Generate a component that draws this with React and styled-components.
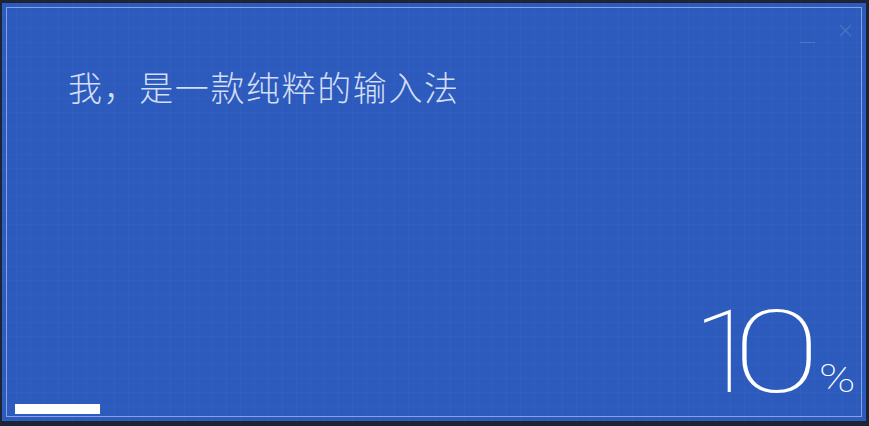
import styled, { createGlobalStyle } from 'styled-components';

const GlobalStyle = createGlobalStyle`
  html, body {
    margin: 0;
    padding: 0;
    background: #1d2433;
    overflow: hidden;
  }
`;

export default function App() {
  return (
    <>
      <GlobalStyle />
      <Window>
        <Panel>
          <Controls>
            <MinButton />
            <CloseButton>
              <svg width="13" height="13" viewBox="0 0 13 13">
                <path d="M1 1 L12 12 M12 1 L1 12" stroke="currentColor" strokeWidth="1.2" fill="none" />
              </svg>
            </CloseButton>
          </Controls>
          <Title>我，是一款纯粹的输入法</Title>
          <Footer>
            <Progress>
              <ProgressFill style={{ width: '100%' }} />
            </Progress>
            <Percent>
              <Glyph $size={115} $ls={-28}>1</Glyph>
              <Glyph $size={115} $ls={-6} $scale={1.4} $gap={15}>0</Glyph>
              <Glyph $size={38} $scale={1.3} $gap={22}>%</Glyph>
            </Percent>
          </Footer>
        </Panel>
      </Window>
    </>
  );
}

const Window = styled.div`
  width: 869px;
  height: 426px;
  box-sizing: border-box;
  padding: 3px 3px 5px 2px;
  background: #1d2433;
  display: flex;
`;

const Panel = styled.div`
  position: relative;
  flex: 1;
  display: flex;
  flex-direction: column;
  justify-content: space-between;
  box-sizing: border-box;
  padding: 67px 15px 7px 13px;
  background-color: #2c5bbd;
  background-image:
    repeating-linear-gradient(90deg, rgba(255, 255, 255, 0.025) 0 1px, transparent 1px 14px),
    repeating-linear-gradient(0deg, rgba(255, 255, 255, 0.025) 0 1px, transparent 1px 14px);
  outline: 1px solid rgba(190, 210, 245, 0.6);
  outline-offset: -5px;
`;

const Controls = styled.div`
  position: absolute;
  top: 15px;
  right: 14px;
  display: flex;
  align-items: center;
  gap: 24px;
  color: rgba(255, 255, 255, 0.14);
`;

const MinButton = styled.div`
  width: 15px;
  height: 1px;
  margin-top: 24px;
  background: rgba(255, 255, 255, 0.14);
`;

const CloseButton = styled.div`
  display: flex;
  width: 13px;
  height: 13px;
`;

const Title = styled.h1`
  margin: 0 0 0 53px;
  font-family: "Noto Sans CJK SC", "Noto Sans", sans-serif;
  font-size: 34px;
  font-weight: 300;
  line-height: 1;
  color: rgba(236, 241, 253, 0.88);
  letter-spacing: 1.6px;
`;

const Footer = styled.div`
  display: flex;
  justify-content: space-between;
  align-items: flex-end;
`;

const Progress = styled.div`
  width: 85px;
  height: 10px;
`;

const ProgressFill = styled.div`
  height: 100%;
  background: #ffffff;
`;

const Percent = styled.div`
  display: flex;
  align-items: baseline;
  margin-bottom: 4px;
  color: #ffffff;
  font-family: Roboto, "Liberation Sans", sans-serif;
  font-weight: 100;
  line-height: 1;
`;

const Glyph = styled.span`
  display: inline-block;
  margin-left: ${(p) => p.$gap || 0}px;
  font-size: ${(p) => p.$size}px;
  letter-spacing: ${(p) => p.$ls || 0}px;
  white-space: nowrap;
  transform: scaleX(${(p) => p.$scale || 1});
`;
